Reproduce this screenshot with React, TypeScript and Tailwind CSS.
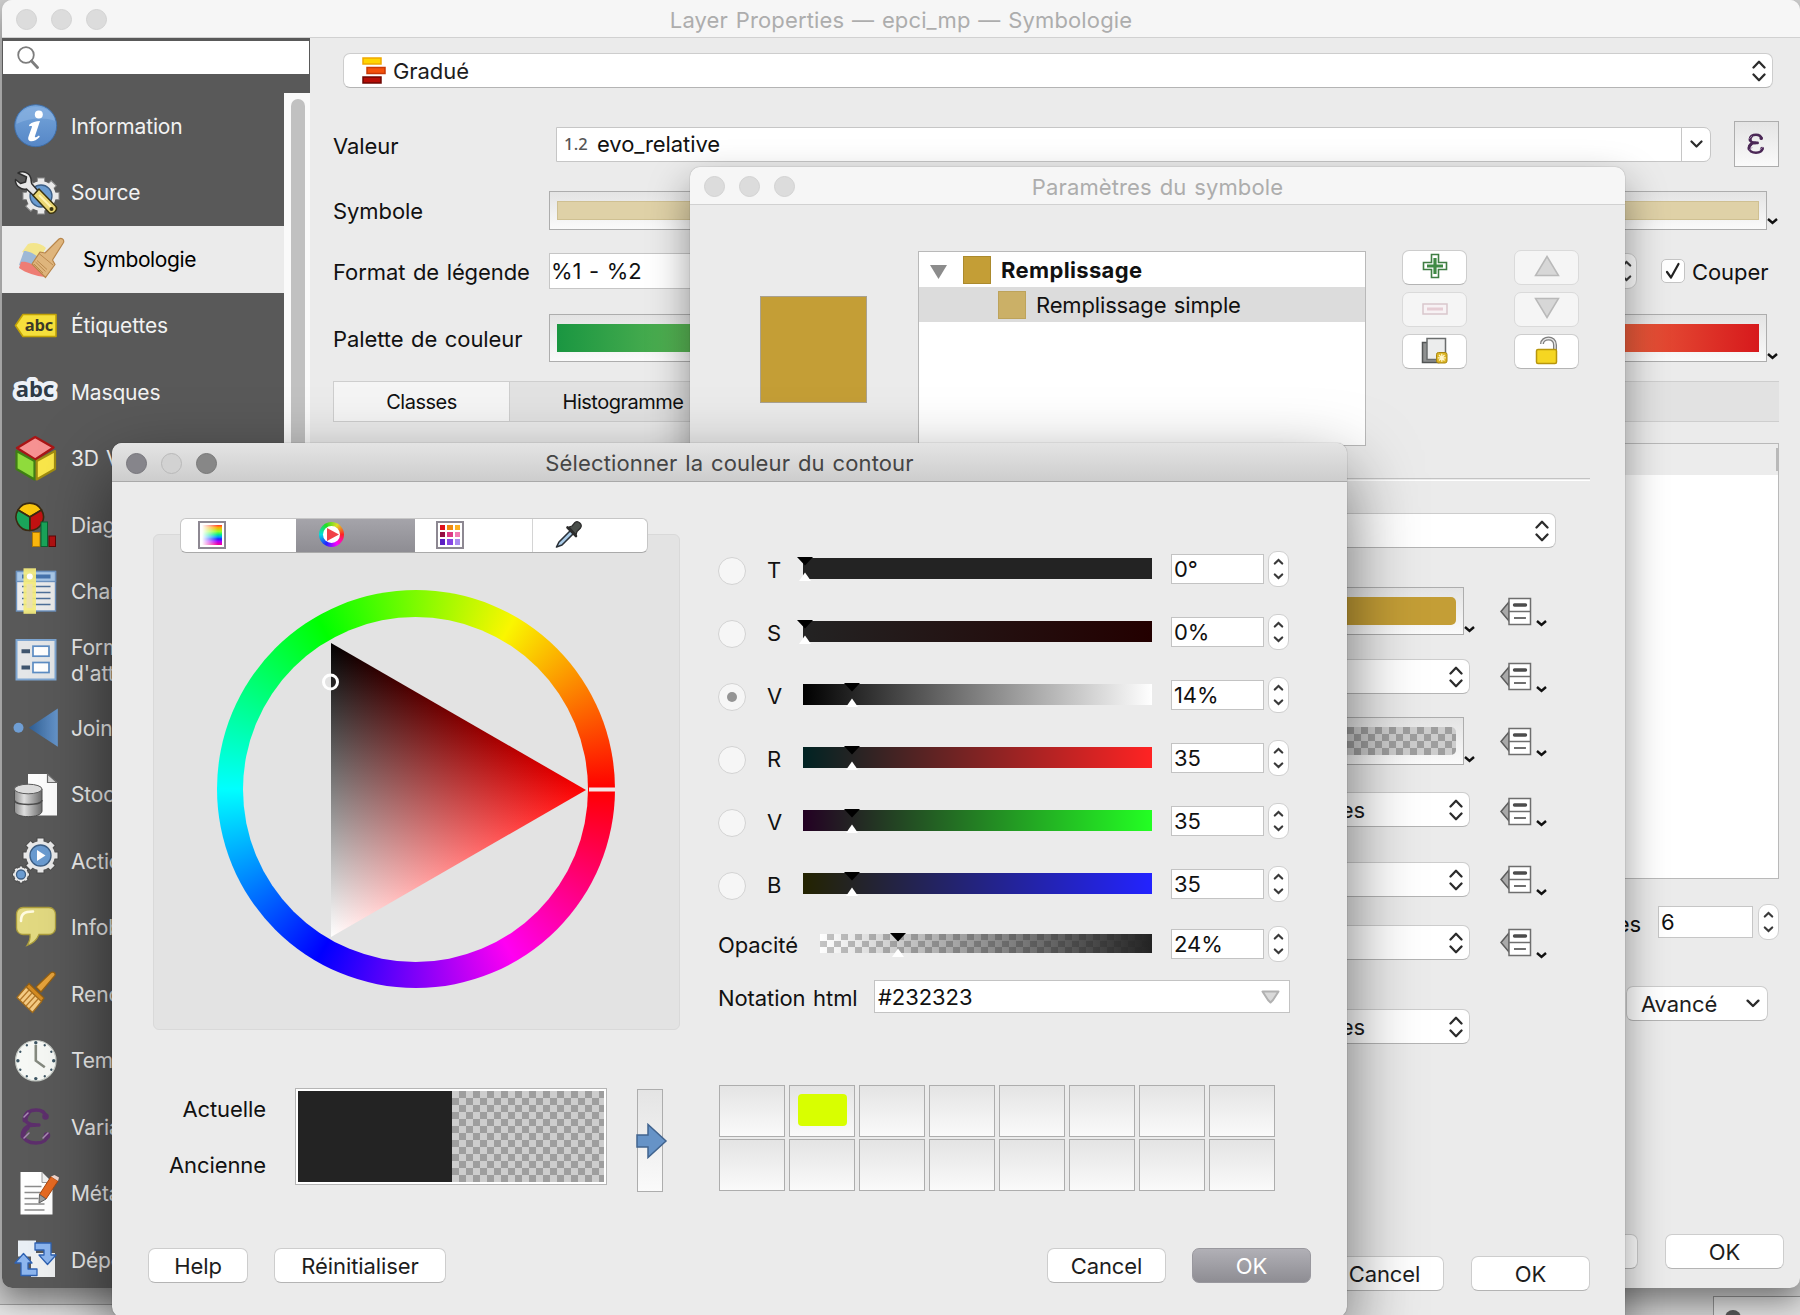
import React from "react";

type P = { className?: string; children?: React.ReactNode };

/* ---------- small drawings ---------- */

function UpDown({ className = "" }: P) {
  return (
    <svg className={"shrink-0 " + className} width="14" height="22" viewBox="0 0 14 22" fill="none" stroke="#2b2b2b" strokeWidth="2.300" strokeLinecap="round" strokeLinejoin="round">
      <path d="M1.500 7.500 7 1.800l5.500 5.700M1.500 14.500 7 20.200l5.500-5.700" />
    </svg>
  );
}

function Down({ className = "", w = 13 }: P & { w?: number }) {
  return (
    <svg className={"shrink-0 " + className} width={w} height={w * 0.62} viewBox="0 0 13 8" fill="none" stroke="#2b2b2b" strokeWidth="2.200" strokeLinecap="round" strokeLinejoin="round">
      <path d="M1.500 1.500 6.500 6.500l5-5" />
    </svg>
  );
}

function MiniDown({ className = "" }: P) {
  return (
    <svg className={"shrink-0 " + className} width="11" height="7" viewBox="0 0 11 7" fill="none" stroke="#111" strokeWidth="2.400">
      <path d="M1 1 5.500 5 10 1" />
    </svg>
  );
}

function Stepper({ className = "" }: P) {
  return (
    <div className={"flex h-[36px] w-[21px] shrink-0 items-center justify-center rounded-[9px] border border-[#cfcfcf] bg-white " + className}>
      <svg width="11" height="22" viewBox="0 0 11 22" fill="none" stroke="#3a3a3a" strokeWidth="2.200" strokeLinecap="round">
        <path d="M1.800 5.500 5.500 2l3.700 3.500M1.800 16.500 5.500 20l3.700-3.500" />
      </svg>
    </div>
  );
}

function DataDefined({ className = "" }: P) {
  return (
    <div className={"flex w-[47px] shrink-0 items-center " + className}>
      <svg width="32" height="29" viewBox="0 0 32 29">
        <path d="M9 5 1 14.500 9 24z" fill="#a9a9a9" stroke="#5c5c5c" strokeWidth="1.500" />
        <rect x="9" y="1.500" width="21.500" height="26" fill="#fff" stroke="#6e6e6e" strokeWidth="1.500" />
        <path d="M9 14.500h21.500" stroke="#6e6e6e" strokeWidth="1.500" />
        <path d="M14.500 8h11" stroke="#4c4c4c" strokeWidth="3.400" strokeLinecap="round" />
        <path d="M14 21h12" stroke="#4c4c4c" strokeWidth="1.600" />
      </svg>
      <MiniDown className="mt-[25px] ml-[4px]" />
    </div>
  );
}

function Epsilon({ size, bold = false }: { size: number; bold?: boolean }) {
  const w = bold ? 4.8 : 3.4;
  return (
    <svg width={size} height={size} viewBox="0 0 44 44" fill="none" stroke={bold ? "#4b2856" : "#5d2f6c"} strokeLinecap="round">
      <path d="M32 12c-1-6-6-7-10-7-6 0-11 3-11 8 0 4 4 7 10 7h4" strokeWidth={w} />
      <path d="M21 20c-8 0-12 4-12 9 0 6 6 9 13 9 6 0 11-2 12-8" strokeWidth={w} />
      <path d="M11 15c0-3 1-5 3-7M9 31c0-3 1-6 4-8" strokeWidth="5" />
      <circle cx="31.500" cy="11.500" r="2" strokeWidth="2.500" />
      <circle cx="33" cy="30.500" r="2" strokeWidth="2.500" />
      <path d="M10 12l4-4M10 33l5-5M29 33l5-5" stroke="#a98bb3" strokeWidth="1.500" />
    </svg>
  );
}

function Icon({ children }: P) {
  return (
    <svg className="shrink-0 overflow-visible" width="44" height="44" viewBox="0 0 44 44">
      {children}
    </svg>
  );
}

const gearTeeth = [0, 45, 90, 135, 180, 225, 270, 315];

function Gear({ cx, cy, r, inner, fill = "#e9e9e9", stroke = "#4a4a4a" }: { cx: number; cy: number; r: number; inner: number; fill?: string; stroke?: string }) {
  return (
    <g>
      {gearTeeth.map((a) => (
        <rect key={a} x={cx - r * 0.2} y={cy - r} width={r * 0.4} height={r * 0.5} transform={`rotate(${a} ${cx} ${cy})`} fill={fill} stroke={stroke} strokeWidth="1" />
      ))}
      <circle cx={cx} cy={cy} r={r * 0.82} fill={fill} />
      <circle cx={cx} cy={cy} r={inner} fill="#6a9bd0" stroke="#3d5f86" strokeWidth="1.300" />
    </g>
  );
}

const icons: Record<string, React.ReactNode> = {
  info: (
    <Icon>
      <defs>
        <linearGradient id="infoG" x1="0" y1="0" x2="0" y2="1">
          <stop offset="0" stopColor="#77a7dc" />
          <stop offset="1" stopColor="#5586c6" />
        </linearGradient>
      </defs>
      <circle cx="21.700" cy="21.700" r="21" fill="url(#infoG)" stroke="#3f6ea8" strokeWidth="1" />
      <path d="M2.500 20C3 9 11 3 21.700 3S40 9 41 17C30 13 15 14 2.500 20z" fill="#8fb6e4" opacity=".55" />
      <circle cx="24.800" cy="10.500" r="4" fill="#fff" />
      <path d="M15 21c3-3 7-4 11-4l-5 15c-.6 2 1 1.500 4-.6l.8 1.400c-3 3.200-6 4.700-9 4.500-3-.3-3-3-2-5.500l3.300-9.300c-.8-.7-1.800-.4-2.800-.3z" fill="#fff" />
    </Icon>
  ),
  source: (
    <Icon>
      <Gear cx={27} cy={25} r={18} inner={11} stroke="#8b8b8b" />
      <path d="M4 2c5-3 12 0 13 6 .3 2 0 3.500 1 5l7 8-4.500 4.500-8-7.500c-3 .8-8-.5-10-4.500-1-2-1.300-3.800-1-5l5 4 5-1.500 1-5z" fill="#e6e6e6" stroke="#2f2f2f" strokeWidth="1.500" strokeLinejoin="round" />
      <path d="M25 18 42 35.500c2 3-2 8-6.500 6.500L19 24.500z" fill="#ecd874" stroke="#3b3410" strokeWidth="1.500" strokeLinejoin="round" />
      <path d="M25 24 37 36" stroke="#fff3b0" strokeWidth="2" />
      <circle cx="37.500" cy="38" r="2" fill="#3b3410" />
    </Icon>
  ),
  symbology: (
    <svg className="shrink-0 overflow-visible" width="48" height="44" viewBox="0 0 48 44">
      <path d="M11 7c5-2 13-1 18 4l-6 10L5 15z" fill="#f3e58c" />
      <path d="M7 14c6 0 12 4 15 7l-4 12L2 28z" fill="#9db8d6" />
      <path d="M4 25c5-1 12 2 16 6l8 9c-9-1-19-4-26-9z" fill="#ee7d74" />
      <path d="M46.500 5.500c1-3-2-5-4.500-3.500L28 16l-5-1-8 12 13.500 13.500 9.500-13-2.500-4.500z" fill="#dfb57c" stroke="#b8864b" strokeWidth="1.200" strokeLinejoin="round" />
      <path d="M22 16.500 36 28M17 27l9 9M20 23.500l10 9M18.500 25l10 9.500" stroke="#b8864b" strokeWidth=".9" />
    </svg>
  ),
  labels: (
    <Icon>
      <path d="M1.500 21.500 9 10.500h33v22H9z" fill="#f6e03c" stroke="#c2a307" strokeWidth="1.600" strokeLinejoin="round" />
      <text x="25" y="27" textAnchor="middle" fontFamily="Open Sans" fontWeight="700" fontSize="16.500" fill="#3b3a28">abc</text>
    </Icon>
  ),
  masks: (
    <Icon>
      <text x="21" y="27" textAnchor="middle" fontFamily="Open Sans" fontWeight="700" fontSize="22" letterSpacing="0" fill="#2d3a46" stroke="#edf1f7" strokeWidth="8" strokeLinejoin="round" paintOrder="stroke">abc</text>
    </Icon>
  ),
  cube: (
    <Icon>
      <path d="M21.200 0 39.500 10.500 21.200 22.500 3 11z" fill="#f69292" stroke="#a81616" strokeWidth="2.400" strokeLinejoin="round" />
      <path d="M2.500 14 20.500 24v18.500L2.500 32z" fill="#8fdb3c" stroke="#3f7f14" strokeWidth="2.200" strokeLinejoin="round" />
      <path d="M41 14 22.700 24v18.500L41 32z" fill="#f9e64a" stroke="#a08c10" strokeWidth="2.200" strokeLinejoin="round" />
    </Icon>
  ),
  diagrams: (
    <Icon>
      <g stroke="#3a2a12" strokeWidth="1.600" strokeLinejoin="round">
        <path d="M15.800 14 4 7a13.500 13.500 0 0 1 23.500 0z" fill="#fbc70f" />
        <path d="M15.800 14 27.500 7a13.500 13.500 0 0 1-11.700 20.500z" fill="#c21212" />
        <path d="M15.800 14v13.500A13.500 13.500 0 0 1 4 7z" fill="#1aa45a" />
      </g>
      <rect x="18.500" y="29.500" width="7.500" height="14" fill="#fbb70f" stroke="#b07b07" />
      <rect x="27" y="19" width="6.500" height="24.500" fill="#1aa45a" stroke="#0b6131" />
      <rect x="35" y="33" width="6.500" height="10.500" fill="#b01212" stroke="#5e0707" />
    </Icon>
  ),
  fields: (
    <Icon>
      <rect x="2.500" y="1.500" width="39" height="39.500" fill="#ebebeb" stroke="#6d93c0" strokeWidth="1.400" />
      <rect x="2.500" y="1.500" width="39" height="10" fill="#a9c8e8" stroke="#6d93c0" strokeWidth="1.400" />
      <path d="M8 6.500h28.500" stroke="#4674ae" strokeWidth="4" />
      <path d="M8 16.500h28.500M8 22.500h28.500M8 28.500h28.500M8 34.500h28.500" stroke="#4d6f99" strokeWidth="1.700" />
      <rect x="9.500" y="-1.700" width="12.500" height="45.500" fill="#f4ec7e" opacity=".93" />
      <rect x="12.500" y="14" width="6" height="24" fill="#ece2ae" />
      <circle cx="15.800" cy="6.500" r="3" fill="#fff" />
    </Icon>
  ),
  form: (
    <Icon>
      <rect x="2.500" y="2" width="39" height="39.500" fill="#e4e6e8" stroke="#7ea6d2" strokeWidth="2" />
      <path d="M7.500 13.200h8.500M7.500 29.500h8.500" stroke="#3f556e" strokeWidth="4" />
      <rect x="19" y="8.200" width="16" height="10" fill="#fff" stroke="#5d8dc4" strokeWidth="1.700" />
      <rect x="19" y="24.500" width="16" height="10" fill="#fff" stroke="#5d8dc4" strokeWidth="1.700" />
    </Icon>
  ),
  joins: (
    <Icon>
      <defs>
        <linearGradient id="joinG">
          <stop offset="0" stopColor="#2f5d92" />
          <stop offset="1" stopColor="#6797cd" />
        </linearGradient>
      </defs>
      <circle cx="4.500" cy="21.800" r="5" fill="#6f9ed4" />
      <path d="M14.800 21.800 43.800 2.500v38.300z" fill="url(#joinG)" />
    </Icon>
  ),
  storage: (
    <Icon>
      <defs>
        <linearGradient id="cylG">
          <stop offset="0" stopColor="#8b8b8b" />
          <stop offset=".35" stopColor="#dedede" />
          <stop offset="1" stopColor="#6b6b6b" />
        </linearGradient>
      </defs>
      <path d="M14 1h19.500l9.500 8.500v33H14z" fill="#fdfdfd" />
      <path d="M33.500 1v8.500H43z" fill="#d9d9d9" stroke="#6a6a6a" strokeWidth="1.200" />
      <path d="M.5 16v22c0 7.500 27.500 7.500 27.500 0V16z" fill="url(#cylG)" stroke="#4c4c4c" strokeWidth="1" />
      <ellipse cx="14.200" cy="16" rx="13.800" ry="4.800" fill="#dcdcdc" stroke="#5b5b5b" strokeWidth="1" />
      <path d="M.5 27c0 6 27.500 6 27.500 0" fill="none" stroke="#4c4c4c" strokeWidth="1.400" />
    </Icon>
  ),
  actions: (
    <Icon>
      <Gear cx={26.500} cy={16.500} r={17.500} inner={10.500} />
      <path d="M23 11v11l8.500-5.500z" fill="#fff" />
      <Gear cx={7} cy={35.500} r={8.500} inner={4.500} />
    </Icon>
  ),
  tips: (
    <Icon>
      <path d="M9 1.500h26a6.500 6.500 0 0 1 6.500 6.500v14a6.500 6.500 0 0 1-6.500 6.500H25c-2 5-6 9-12 11 2-3 3.500-7 3-11H9A6.500 6.500 0 0 1 2.500 22V8A6.500 6.500 0 0 1 9 1.500z" fill="#e2d981" stroke="#aa9c3c" strokeWidth="1.300" />
      <path d="M7 15c0-7 3-9.500 12-9.500" stroke="#fffbe0" strokeWidth="2.600" fill="none" strokeLinecap="round" />
    </Icon>
  ),
  rendering: (
    <Icon>
      <path d="M41 3.500c1-3-2.500-4.500-4.500-2.500L22 15l5 5z" fill="#e5a23b" stroke="#935f12" strokeWidth="1.200" />
      <path d="M15 11.500 30 26l-3 4L12 15z" fill="#d48b22" stroke="#935f12" strokeWidth="1.200" />
      <path d="M12 15 27.500 29.500 18.500 40.500 3 25.500z" fill="#f3ca83" stroke="#a36c1c" strokeWidth="1.200" strokeLinejoin="round" />
      <path d="M15 18 6 28M18 21 9 31M21 24l-9 10M24 27 15 37" stroke="#b5792a" strokeWidth="1.200" />
    </Icon>
  ),
  temporal: (
    <Icon>
      <circle cx="21.800" cy="21.700" r="20.200" fill="#f6f8f5" stroke="#c4c9c4" strokeWidth="1.200" />
      {[0, 30, 60, 90, 120, 150, 180, 210, 240, 270, 300, 330].map((a) => (
        <circle key={a} cx="21.800" cy="3.800" r={a % 90 === 0 ? 1.7 : 1.2} fill="#3d5563" transform={`rotate(${a} 21.800 21.700)`} />
      ))}
      <path d="M21.800 6v15.700l9 6.500" fill="none" stroke="#84897f" strokeWidth="2.600" />
    </Icon>
  ),
  variables: <Epsilon size={44} />,
  metadata: (
    <Icon>
      <path d="M6.500 0h21.500l10.500 10.500v32h-32z" fill="#fff" />
      <path d="M28 0v10.500h10.500z" fill="#f0f0f0" stroke="#9a9a9a" strokeWidth="1" />
      <path d="M10.500 14.500h17M10.500 20.500h17M10.500 26.500h14M10.500 32h20M10.500 38h20" stroke="#8c8c8c" strokeWidth="1.700" />
      <path d="M37 4.500 44 9 32 27l-6.500-4.500z" fill="#e66a22" stroke="#a9450c" strokeWidth="1" />
      <path d="M37 4.500 44 9l1-3.500-4.500-2.500z" fill="#f3d8cf" />
      <path d="M25.500 22.500 32 27l-7 4z" fill="#9d9d9d" stroke="#5e5e5e" strokeWidth="1" />
    </Icon>
  ),
  dependencies: (
    <Icon>
      <path d="M4 2.500h18v16H4z" fill="#e9eff5" />
      <path d="M17 15h24v24H17z" fill="#eef0f1" />
      <path d="M21 5h16v12h5l-8.500 9.500L25 17h5v-5h-9z" fill="#8db6ef" stroke="#2f62b2" strokeWidth="1.300" strokeLinejoin="round" />
      <path d="M23 37.500H7V25H1l8.500-9.500L18 25h-4v6h9z" fill="#8db6ef" stroke="#2f62b2" strokeWidth="1.300" strokeLinejoin="round" />
    </Icon>
  ),
};

/* ---------- controls ---------- */

function Lights({ active = false }: { active?: boolean }) {
  const dim = "size-[21px] rounded-full border border-[#d2d2d2] bg-[#dcdcdc]";
  return (
    <div className="flex w-[120px] gap-[14px] pt-[2px] pl-[14px]">
      <span className={active ? "size-[21px] rounded-full border border-[#77767c] bg-[#86858b]" : dim} />
      <span className={active ? "size-[21px] rounded-full border border-[#b9b9b9] bg-[#d2d2d2]" : dim} />
      <span className={active ? "size-[21px] rounded-full border border-[#787878] bg-[#878787]" : dim} />
    </div>
  );
}

function TitleBar({ title, active = false, className = "" }: { title: string; active?: boolean; className?: string }) {
  return (
    <div
      className={
        "flex shrink-0 items-center border-b tracking-[0.130px] " +
        (active
          ? "h-[39px] border-[#a9a9a9] bg-linear-to-b from-[#e4e4e4] to-[#cdcdcd] text-[#454545] "
          : "h-[38px] border-[#d1d1d1] bg-[#f6f6f6] text-[#adadad] ") +
        className
      }
    >
      <Lights active={active} />
      <div className="flex-1 pt-[2px] text-center">{title}</div>
      <div className="w-[120px]" />
    </div>
  );
}

function Button({ className = "", children }: P) {
  return (
    <button className={"flex h-[35px] shrink-0 items-center justify-center rounded-[7px] border border-[#cdcdcd] border-b-[#b4b4b4] bg-white text-[#1d1d1d] " + className}>
      {children}
    </button>
  );
}

function Combo({ className = "", children }: P) {
  return (
    <div className={"flex h-[35px] shrink-0 items-center rounded-[7px] border border-[#cdcdcd] border-b-[#b4b4b4] bg-white pr-[6px] text-[#1d1d1d] " + className}>
      <div className="flex flex-1 items-center">{children}</div>
      <UpDown />
    </div>
  );
}

function Bevel({ className = "", children }: P) {
  return <div className={"shrink-0 border-[1.500px] border-[#adadad] bg-linear-to-b from-[#e4e4e4] to-[#fafafa] " + className}>{children}</div>;
}

const checker = "bg-[conic-gradient(#9e9e9e_25%,#cdcdcd_0_50%,#9e9e9e_0_75%,#cdcdcd_0)] bg-[length:14px_14px]";

/* ---------- layer properties window ---------- */

const nav: { id: string; label: string }[] = [
  { id: "info", label: "Information" },
  { id: "source", label: "Source" },
  { id: "symbology", label: "Symbologie" },
  { id: "labels", label: "Étiquettes" },
  { id: "masks", label: "Masques" },
  { id: "cube", label: "3D View" },
  { id: "diagrams", label: "Diagrammes" },
  { id: "fields", label: "Champs" },
  { id: "form", label: "Formulaire\nd'attributs" },
  { id: "joins", label: "Jointures" },
  { id: "storage", label: "Stockage" },
  { id: "actions", label: "Actions" },
  { id: "tips", label: "Infobulles" },
  { id: "rendering", label: "Rendu" },
  { id: "temporal", label: "Temporel" },
  { id: "variables", label: "Variables" },
  { id: "metadata", label: "Métadonnées" },
  { id: "dependencies", label: "Dépendances" },
];

function Sidebar() {
  return (
    <div className="flex w-[308px] shrink-0 flex-col">
      <div className="h-[55px] shrink-0 bg-[#595959] px-px pt-[3px]">
        <div className="flex h-[33px] items-center bg-white pl-[14px]">
          <svg width="22" height="24" viewBox="0 0 22 24" fill="none" stroke="#7d7d7d" strokeWidth="1.800">
            <circle cx="9" cy="9" r="7.800" />
            <path d="M14.500 15l6 6.500" strokeWidth="2.800" strokeLinecap="round" />
          </svg>
        </div>
      </div>
      <div className="flex min-h-0 flex-1">
        <div className="w-[282px] overflow-hidden bg-[#595959] text-[21px] tracking-[-0.150px]">
          {nav.map((n) => {
            const sel = n.id === "symbology";
            return (
              <div
                key={n.id}
                className={
                  "flex items-center " +
                  (n.id === "form" ? "h-[70px] " : "h-[66.500px] ") +
                  (sel ? "gap-[18px] bg-[#ebebeb] pl-[15px] text-black" : "gap-[13px] pl-[12px] text-[#f2f2f2]")
                }
              >
                {icons[n.id]}
                <span className={"pt-px leading-[26px] whitespace-pre " + (sel ? "tracking-[-0.400px]" : "")}>{n.label}</span>
              </div>
            );
          })}
        </div>
        <div className="w-[26px] bg-[#fafafa] pt-[6px] pl-[7px]">
          <div className="h-full w-[14px] rounded-t-full bg-[#c1c1c1]" />
        </div>
      </div>
    </div>
  );
}

function LayerProperties() {
  return (
    <div className="absolute top-0 left-[2px] flex h-[1288px] w-[1798px] flex-col overflow-hidden rounded-[10px] bg-[#ebebeb] shadow-[0_12px_30px_rgba(0,0,0,0.450)]">
      <TitleBar title="Layer Properties — epci_mp — Symbologie" />
      <div className="flex min-h-0 flex-1">
        <Sidebar />
        <div className="flex flex-1 flex-col pl-[23px]">
          <Combo className="mt-[15px] mr-[27px] ml-[10px] pl-[18px]">
            <svg width="25" height="28" viewBox="0 0 25 28">
              <rect x="1" y="1" width="18" height="6" fill="#ffd500" stroke="#efa800" strokeWidth="1.500" />
              <rect x="5" y="10.500" width="18" height="6" fill="#f4510b" stroke="#c93806" strokeWidth="1.500" />
              <rect x="1" y="20" width="18" height="6" fill="#b50d05" stroke="#6d0703" strokeWidth="1.500" />
            </svg>
            <span className="ml-[6px]">Gradué</span>
          </Combo>

          <div className="mt-[33px] flex h-[46px] items-center">
            <span className="w-[223px] pt-[4px]">Valeur</span>
            <div className="flex h-[35px] w-[1155px] items-center rounded-r-[7px] border-[1.500px] border-[#c6c6c6] bg-white">
              <span className="w-[40px] pl-[7px] font-['Noto_Sans'] text-[16.500px] font-medium tracking-[0.200px] text-[#555]">1.2</span>
              <span className="flex-1">evo_relative</span>
              <span className="flex h-full w-[29px] items-center justify-center border-l border-[#c6c6c6]">
                <Down />
              </span>
            </div>
            <Bevel className="ml-[23px] flex h-[46px] w-[45px] items-center justify-center pr-px">
              <Epsilon size={24} bold />
            </Bevel>
          </div>

          <div className="mt-[24px] flex h-[39px] items-center">
            <span className="w-[216px]">Symbole</span>
            <Bevel className="h-[39px] w-[1218px] px-[7px] py-[9px]">
              <div className="h-full border border-[#cfc092] bg-[#dfd1a7]" />
            </Bevel>
            <MiniDown className="mt-[22px]" />
          </div>

          <div className="mt-[23px] flex h-[36px] items-center">
            <span className="w-[216px] pt-[2px]">Format de légende</span>
            <div className="flex h-[36px] w-[1060px] items-center border-[1.500px] border-[#c6c6c6] bg-white pl-px">%1 - %2</div>
            <Stepper className="ml-[7px]" />
            <span className="ml-[24px] flex size-[24px] items-center justify-center rounded-[5px] border border-[#c4c4c4] bg-white">
              <svg width="16" height="18" viewBox="0 0 16 18" fill="none" stroke="#222" strokeWidth="2.200" strokeLinecap="round" strokeLinejoin="round">
                <path d="M2 10l4 5.500L13.500 2" />
              </svg>
            </span>
            <span className="ml-[7px] pt-[2px]">Couper</span>
          </div>

          <div className="mt-[25px] flex h-[48px] items-center">
            <span className="w-[216px] pt-[2px]">Palette de couleur</span>
            <Bevel className="h-[48px] w-[1218px] px-[7px] py-[9px]">
              <div className="h-full bg-[linear-gradient(90deg,#1a9641,#a6d96a_25%,#ffffc0_50%,#fdae61_75%,#d7191c)]" />
            </Bevel>
            <MiniDown className="mt-[36px]" />
          </div>

          <div className="mt-[19px] mr-[21px] flex h-[41px] border-y-[1.500px] border-l-[1.500px] border-[#cecece] bg-[#e2e2e2] text-[20px] tracking-[-0.500px]">
            <div className="flex w-[176px] items-center justify-center border-r-[1.500px] border-[#cecece] bg-[#f5f5f5] text-center">Classes</div>
            <div className="flex w-[226px] items-center justify-center text-center">Histogramme</div>
          </div>

          <div className="mt-[21px] mr-[21px] flex h-[436px] flex-col border-[1.500px] border-[#b9b9b9] bg-white">
            <div className="flex h-[31px] justify-end bg-[#ececec] py-[4px]">
              <div className="w-[2px] bg-[#b9b9b9]" />
            </div>
          </div>

          <div className="mt-[25px] mr-[21px] flex h-[36px] items-center justify-end">
            <span className="mr-[17px] pt-[3px]">Classes</span>
            <div className="flex h-[32px] w-[95px] items-center border-[1.500px] border-[#c6c6c6] bg-white pl-[2px]">6</div>
            <Stepper className="ml-[5px]" />
          </div>

          <div className="mt-[46px] mr-[32px] flex justify-end">
            <Button className="w-[142px] pr-[7px] pl-[14px]">
              <span className="flex-1 text-left">Avancé</span>
              <Down w={14} />
            </Button>
          </div>

          <div className="mt-[213px] mr-[16px] flex justify-end gap-[27px]">
            <Button className="w-[119px]">Cancel</Button>
            <Button className="w-[119px]">OK</Button>
          </div>
        </div>
      </div>
    </div>
  );
}

/* ---------- symbol settings window ---------- */

function SmallButton({ dim = false, children }: { dim?: boolean; children?: React.ReactNode }) {
  return <Button className={"w-[65px] " + (dim ? "border-[#dadada]! bg-[#f5f5f5]!" : "")}>{children}</Button>;
}

function SymbolSettings() {
  return (
    <div className="absolute top-[167px] left-[690px] flex h-[1180px] w-[935px] flex-col rounded-[10px] bg-[#ebebeb] shadow-[0_0_1px_rgba(0,0,0,0.500),0_18px_42px_rgba(0,0,0,0.400)]">
      <TitleBar title="Paramètres du symbole" className="rounded-t-[10px]" />
      <div className="mt-[46px] flex h-[195px] pl-[70px]">
        <div className="mt-[45px] size-[107px] shrink-0 border-[1.500px] border-[#a9a190] bg-[#c49e36]" />
        <div className="ml-[51px] flex w-[448px] shrink-0 flex-col border-[1.500px] border-[#b9b9b9] bg-white">
          <div className="flex h-[35px] items-center pl-[11px] font-bold tracking-[0.350px]">
            <svg className="mt-[5px]" width="17" height="14" viewBox="0 0 17 14">
              <path d="M0 0h17L8.500 14z" fill="#8c8c8c" />
            </svg>
            <span className="ml-[16px] size-[28px] border border-[#ab8a2d] bg-[#c49e36]" />
            <span className="ml-[10px]">Remplissage</span>
          </div>
          <div className="flex h-[35px] items-center bg-[#dcdcdc] pl-[79px]">
            <span className="size-[28px] border border-[#bda35b] bg-[#cbb067]" />
            <span className="ml-[10px] tracking-[-0.150px]">Remplissage simple</span>
          </div>
        </div>
        <div className="mt-[-1px] ml-[36px] grid grid-cols-[65px_65px] content-start gap-x-[47px] gap-y-[7px]">
          <SmallButton>
            <svg className="mb-[3px]" width="26" height="26" viewBox="0 0 26 26">
              <path d="M9.500 1.500h7v8h8v7h-8v8h-7v-8h-8v-7h8z" fill="#fff" stroke="#3f7d43" strokeWidth="1.600" />
              <path d="M13 5v16M5 13h16" stroke="#3f8a44" strokeWidth="3.200" />
            </svg>
          </SmallButton>
          <SmallButton dim>
            <svg className="mb-[4px]" width="26" height="22" viewBox="0 0 26 22">
              <path d="M13 1.500 24.500 20.500h-23z" fill="#d7d7d7" stroke="#b9b9b9" strokeWidth="1.500" />
            </svg>
          </SmallButton>
          <SmallButton dim>
            <svg className="mb-[2px]" width="26" height="12" viewBox="0 0 26 12">
              <rect x="1" y="1" width="24" height="10" fill="#f7f2f4" stroke="#d9c6cc" strokeWidth="1.500" />
              <path d="M5 6h16" stroke="#e6cdd4" strokeWidth="3" />
            </svg>
          </SmallButton>
          <SmallButton dim>
            <svg className="mb-[4px]" width="26" height="22" viewBox="0 0 26 22">
              <path d="M13 20.500 24.500 1.500h-23z" fill="#d7d7d7" stroke="#b9b9b9" strokeWidth="1.500" />
            </svg>
          </SmallButton>
          <SmallButton>
            <svg className="mb-[2px]" width="27" height="27" viewBox="0 0 27 27">
              <path d="M1.500 5.500h16v20h-16z" fill="#8f9191" stroke="#525555" strokeWidth="1.500" />
              <path d="M6 1.500h18.500v21H6z" fill="#eceded" stroke="#6a6d6d" strokeWidth="1.500" />
              <rect x="15.500" y="15.500" width="10.500" height="10.500" rx="2" fill="#dcb524" stroke="#a8850f" />
              <path d="M20.800 16.800v8M16.800 20.800h8M18 18l5.500 5.500M23.500 18 18 23.500" stroke="#fff5c8" strokeWidth="1.300" />
            </svg>
          </SmallButton>
          <SmallButton>
            <svg className="mb-[3px]" width="24" height="29" viewBox="0 0 24 29">
              <path d="M7 8c0-7 13-8 13 1v5" fill="none" stroke="#7f7f7f" strokeWidth="4" />
              <path d="M7 8c0-7 13-8 13 1v5" fill="none" stroke="#e9e9e9" strokeWidth="1.400" />
              <rect x="1.500" y="13.500" width="20" height="14" rx="1.500" fill="#f5d622" stroke="#b8960c" strokeWidth="1.500" />
            </svg>
          </SmallButton>
        </div>
      </div>

      <div className="mt-[32px] mr-[35px] ml-[35px] h-[3px] border-t-[1.500px] border-b-[1.500px] border-t-[#c3c3c3] border-b-white" />

      <div className="flex flex-col pl-[250px]">
        <Combo className="mt-[32px] w-[616px]" />
        <div className="mt-[39px] flex h-[48px] items-center">
          <Bevel className="h-[48px] w-[524px] px-[7px] py-[9px]">
            <div className="h-full rounded-[5px] bg-[#c49e36]" />
          </Bevel>
          <MiniDown className="mt-[36px]" />
          <DataDefined className="ml-[25px]" />
        </div>
        <div className="mt-[24px] flex h-[35px] items-center">
          <Combo className="w-[530px]" />
          <DataDefined className="ml-[30px]" />
        </div>
        <div className="mt-[23px] flex h-[48px] items-center">
          <Bevel className="h-[48px] w-[524px] px-[7px] py-[9px]">
            <div className={"h-full rounded-[5px] " + checker} />
          </Bevel>
          <MiniDown className="mt-[36px]" />
          <DataDefined className="ml-[25px]" />
        </div>
        <div className="mt-[27px] flex h-[35px] items-center">
          <Combo className="w-[530px] pl-[312px]">Millimètres</Combo>
          <DataDefined className="ml-[30px] pt-[3px]" />
        </div>
        <div className="mt-[35px] flex h-[35px] items-center">
          <Combo className="w-[530px]" />
          <DataDefined className="ml-[30px]" />
        </div>
        <div className="mt-[28px] flex h-[35px] items-center">
          <Combo className="w-[530px]" />
          <DataDefined className="ml-[30px]" />
        </div>
        <Combo className="mt-[49px] w-[530px] pl-[312px]">Millimètres</Combo>
      </div>

      <div className="mt-[212px] flex justify-end gap-[27px] pr-[35px]">
        <Button className="w-[119px]">Cancel</Button>
        <Button className="w-[119px]">OK</Button>
      </div>
    </div>
  );
}

/* ---------- colour picker window ---------- */

function ColorWheel() {
  return (
    <div className="-ml-[2px] flex size-[398px] items-center justify-center rounded-full bg-[conic-gradient(from_90deg,#f00,#ff00f2,#00f,#0ff,#0f0,#faf600,#f00)]">
      <div className="relative size-[345px] rounded-full bg-[#e3e3e3]">
        <svg className="absolute -top-[26px] -left-[26px] isolate" width="398" height="398" viewBox="0 0 398 398">
          <defs>
            <linearGradient id="hueG" gradientUnits="userSpaceOnUse" x1="114" y1="0" x2="369" y2="0">
              <stop offset="0" stopColor="#000" />
              <stop offset="1" stopColor="#f00" />
            </linearGradient>
            <linearGradient id="whiteG" gradientUnits="userSpaceOnUse" x1="241.500" y1="125.400" x2="114" y2="346.200">
              <stop offset="0" stopColor="#000" />
              <stop offset="1" stopColor="#fff" />
            </linearGradient>
            <clipPath id="triangle">
              <path d="M114 52 369 199 114 346z" />
            </clipPath>
          </defs>
          <g className="isolate" clipPath="url(#triangle)">
            <rect x="110" y="45" width="265" height="310" fill="url(#hueG)" />
            <rect className="mix-blend-plus-lighter" x="110" y="45" width="265" height="310" fill="url(#whiteG)" />
          </g>
          <circle cx="113.500" cy="91" r="7" fill="none" stroke="#fff" strokeWidth="3" />
          <path d="M372 198.500h26" stroke="#f3e4e4" strokeWidth="4" />
        </svg>
      </div>
    </div>
  );
}

function Marker({ pos }: { pos: number }) {
  return (
    <svg className="absolute -top-px -ml-[8px]" style={{ left: pos }} width="16" height="24" viewBox="0 0 16 24">
      <path d="M0 0h16L8 8.500z" fill="#000" />
      <path d="M8 15.500 14 24H2z" fill="#fff" />
    </svg>
  );
}

const sliders = [
  { l: "T", bg: "bg-[#232323]", pos: 1.5, v: "0°" },
  { l: "S", bg: "bg-linear-to-r/srgb from-[#232323] to-[#230000]", pos: 1.5, v: "0%" },
  { l: "V", bg: "bg-linear-to-r/srgb from-black to-white", pos: 49, v: "14%", on: true },
  { l: "R", bg: "bg-linear-to-r/srgb from-[#002323] to-[#ff2323]", pos: 49, v: "35" },
  { l: "V", bg: "bg-linear-to-r/srgb from-[#230023] to-[#23ff23]", pos: 49, v: "35" },
  { l: "B", bg: "bg-linear-to-r/srgb from-[#232300] to-[#2323ff]", pos: 49, v: "35" },
];

function NumberBox({ value }: { value: string }) {
  return (
    <>
      <div className="flex h-[30px] w-[93px] items-center border-[1.500px] border-[#c3c3c3] bg-white pl-[2px]">{value}</div>
      <Stepper className="ml-[4px]" />
    </>
  );
}

function ColorPicker() {
  return (
    <div className="absolute top-[443px] left-[112px] flex h-[874px] w-[1235px] flex-col rounded-[10px] bg-[#ebebeb] shadow-[0_0_1px_rgba(0,0,0,0.600),0_28px_70px_rgba(0,0,0,0.550)]">
      <TitleBar title="Sélectionner la couleur du contour" active className="rounded-t-[10px]" />

      <div className="flex h-[602px]">
        <div className="w-[606px] pt-[36px] pl-[41px]">
          <div className="relative z-10 ml-[27px] flex h-[35px] w-[468px] overflow-hidden rounded-[6px] border border-[#c6c6c6] border-b-[#aaa] bg-white">
            <div className="flex w-[115px] items-center pb-[2px] pl-[17px]">
              <div className="size-[28px] border-2 border-[#8d8892] bg-white p-[2px]">
                <div className="h-full bg-[linear-gradient(90deg,#fff,transparent_80%),linear-gradient(#f33,#fa0_12%,#9f2_32%,#0e8_48%,#09f_60%,#22f_70%,#a0f_82%,#f08)]" />
              </div>
            </div>
            <div className="flex w-[119px] items-center bg-linear-to-b from-[#a5a4aa] to-[#8e8d93] pb-[2px] pl-[23px]">
              <div className="flex size-[25px] items-center justify-center rounded-full bg-[conic-gradient(from_90deg,#f22,#f0f,#22f,#0dd,#2d2,#dd2,#f22)]">
                <div className="flex size-[17px] items-center justify-center rounded-full bg-white">
                  <svg className="ml-[2px]" width="12" height="13" viewBox="0 0 12 13">
                    <path d="M0 0 12 6.500 0 13z" fill="#f04148" />
                  </svg>
                </div>
              </div>
            </div>
            <div className="flex w-[118px] items-center border-r border-[#d4d4d4] pb-[2px] pl-[21px]">
              <div className="grid size-[28px] grid-cols-3 gap-[2px] border-2 border-[#8d8892] bg-white p-[2px]">
                <i className="bg-[#e0101c]" />
                <i className="bg-[#ee8a12]" />
                <i className="bg-[#fbb023]" />
                <i className="bg-[#960f44]" />
                <i className="bg-[#dd3a86]" />
                <i className="bg-[#f27ab5]" />
                <i className="bg-[#5c1fc2]" />
                <i className="bg-[#8746e4]" />
                <i className="bg-[#a98af0]" />
              </div>
            </div>
            <div className="flex items-center pb-[2px] pl-[22px]">
              <svg width="28" height="28" viewBox="0 0 28 28">
                <path d="M16 9 4 21l-2.500 5L7 24 19 12z" fill="#a9cbe8" stroke="#2a3138" strokeWidth="1.600" strokeLinejoin="round" />
                <path d="M14 6l3-1 3-3.500c3-2.500 8 2 5.500 5.500L22 10.500l-1 3.500z" fill="#4a4f4b" stroke="#2b2b2b" strokeWidth="1.200" strokeLinejoin="round" />
                <path d="M12.500 6.500 21 15" stroke="#2b2b2b" strokeWidth="2.600" strokeLinecap="round" />
              </svg>
            </div>
          </div>
          <div className="mt-[-19px] flex h-[496px] w-[527px] justify-center rounded-[6px] border-[1.500px] border-[#d9d9d9] bg-[#e3e3e3] pt-[55px]">
            <ColorWheel />
          </div>
        </div>

        <div className="w-[573px] pt-[55px]">
          {sliders.map((s, i) => (
            <div key={i} className="flex h-[63px] items-center">
              <span className="mt-[4px] mr-[21px] flex size-[28px] items-center justify-center rounded-full border-[1.500px] border-[#d3d3d3] bg-[#f6f6f6]">
                {s.on && <span className="size-[10px] rounded-full bg-[#949494]" />}
              </span>
              <span className="w-[36px] pt-[3px]">{s.l}</span>
              <div className={"relative h-[21px] w-[349px] " + s.bg}>
                <Marker pos={s.pos} />
              </div>
              <div className="ml-[19px] flex items-center pt-px">
                <NumberBox value={s.v} />
              </div>
            </div>
          ))}
          <div className="mt-[-3px] flex h-[63px] items-center">
            <span className="w-[102px] pt-[3px]">Opacité</span>
            <div className="relative h-[19px] w-[332px]">
              <div className="h-full bg-[linear-gradient(90deg,rgba(35,35,35,0),#232323),conic-gradient(#c4c4c4_25%,#fff_0_50%,#c4c4c4_0_75%,#fff_0)] bg-[length:100%_100%,14px_13px]" />
              <Marker pos={78} />
            </div>
            <div className="ml-[19px] flex items-center pt-px">
              <NumberBox value="24%" />
            </div>
          </div>
          <div className="mt-[5px] flex h-[33px] items-center">
            <span className="w-[156px] pt-[2px]">Notation html</span>
            <div className="flex h-[33px] w-[416px] items-center justify-between border-[1.500px] border-[#c3c3c3] bg-white pr-[9px] pl-[3px]">
              #232323
              <svg width="19" height="14" viewBox="0 0 19 14">
                <path d="M1.500 1.500h16L12 10l-2.500 2.500L7 10z" fill="#d9d9d9" stroke="#b1b1b1" strokeWidth="2" strokeLinejoin="round" />
              </svg>
            </div>
          </div>
        </div>
      </div>

      <div className="flex h-[164px]">
        <div className="flex w-[154px] shrink-0 flex-col items-end gap-[30px] pt-[12px]">
          <span className="leading-[26px]">Actuelle</span>
          <span className="leading-[26px]">Ancienne</span>
        </div>
        <div className="mt-[4px] ml-[29px] flex h-[97px] w-[312px] shrink-0 border-[1.500px] border-[#b5b5b5] bg-white p-[2px]">
          <div className="w-[154px] bg-[#232323]" />
          <div className={"flex-1 " + checker} />
        </div>
        <Bevel className="mt-[5px] ml-[30px] flex h-[103px] w-[26px] items-center">
          <svg className="-ml-[2px] shrink-0" width="32" height="36" viewBox="0 0 32 36">
            <path d="M1 12h11V1.500L30 18 12 34.500V24H1z" fill="#6693c7" stroke="#41648f" strokeWidth="1.500" />
          </svg>
        </Bevel>
        <div className="mt-px ml-[56px] grid grid-cols-[repeat(8,66px)] grid-rows-[52px_52px] content-start gap-x-[4px] gap-y-[2px]">
          {Array.from({ length: 16 }, (_, i) => (
            <Bevel key={i} className="flex items-center justify-center border-2">
              {i === 1 && <div className="mt-[-2px] h-[32px] w-[49px] rounded-[4px] bg-[#d8ff00]" />}
            </Bevel>
          ))}
        </div>
      </div>

      <div className="flex pr-[36px] pl-[36px]">
        <Button className="w-[100px]">Help</Button>
        <Button className="ml-[26px] w-[172px]">Réinitialiser</Button>
        <Button className="ml-auto w-[119px]">Cancel</Button>
        <Button className="ml-[26px] w-[119px] border-[#99989e]! bg-linear-to-b from-[#b1b0b6] to-[#8e8d93] text-white!">OK</Button>
      </div>
    </div>
  );
}

export default function App() {
  return (
    <div className="relative h-[1315px] w-[1800px] overflow-hidden bg-[#d0d0d0] font-['Inter'] text-[22px] leading-none tracking-[-0.080px] text-[#111] [word-spacing:1.500px]">
      <div className="flex h-full flex-col justify-end">
        <div className="flex h-[19px] items-end justify-between">
          <div className="h-[11px] w-[140px] border-t border-[#a0a0a0] bg-[#e6e6e6]" />
          <div className="flex h-full w-[87px] justify-start border-t-[1.500px] border-l-[1.500px] border-[#8f8f8f] bg-[#dedede] pt-[13px] pl-[11px]">
            <span className="size-[16px] shrink-0 rounded-full bg-[#555]" />
          </div>
        </div>
      </div>
      <LayerProperties />
      <SymbolSettings />
      <ColorPicker />
    </div>
  );
}
